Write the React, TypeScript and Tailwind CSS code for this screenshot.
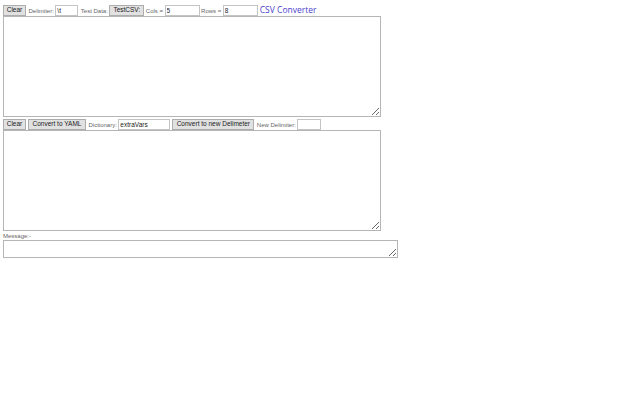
export default function App() {
  const btn =
    'shrink-0 h-[11px] px-0 bg-[#e1e1e1] border border-[#adadad] text-[6.5px] leading-none text-[#222] flex items-center justify-center whitespace-nowrap overflow-hidden'
  const label = 'shrink-0 whitespace-nowrap text-[6px] leading-none text-[#666] px-[1.5px]'
  const input =
    'shrink-0 h-[11px] border border-[#c4c4c4] bg-white text-[6.5px] leading-none text-[#222] px-[1px] outline-none'

  return (
    <div className="min-h-screen bg-white pl-[3px] pt-[5px] font-['Liberation_Sans','DejaVu_Sans',sans-serif]">
      {/* Top toolbar */}
      <div className="flex items-center h-[11px]">
        <button className={`${btn} w-[23px]`}>Clear</button>
        <span className={`${label} ml-[1px]`}>Delimiter:</span>
        <input className={`${input} w-[23px]`} defaultValue={'\\t'} />
        <span className={`${label} ml-[1px]`}>Test Data:</span>
        <button className={`${btn} w-[35px]`}>TestCSV:</button>
        <span className={label}>Cols =</span>
        <input className={`${input} w-[35px]`} defaultValue="5" />
        <span className={label}>Rows =</span>
        <input className={`${input} w-[35px]`} defaultValue="8" />
        <span className="ml-[2px] whitespace-nowrap text-[8.5px] leading-none text-[#4b3fd0] font-['Open_Sans',sans-serif]">
          CSV Converter
        </span>
      </div>

      <textarea className="block w-[378px] h-[101px] border border-[#b5b5b5] resize-y" />

      {/* Second toolbar */}
      <div className="flex items-center h-[11px] mt-[2px]">
        <button className={`${btn} w-[23px]`}>Clear</button>
        <button className={`${btn} w-[58px] ml-[2px]`}>Convert to YAML</button>
        <span className={`${label} ml-[1px]`}>Dictionary:</span>
        <input className={`${input} w-[52px]`} defaultValue="extraVars" />
        <button className={`${btn} w-[82px] ml-[2px]`}>Convert to new Delimeter</button>
        <span className={`${label} ml-[1px]`}>New Delimiter:</span>
        <input className={`${input} w-[24px]`} defaultValue="" />
      </div>

      <textarea className="block w-[378px] h-[101px] border border-[#b5b5b5] resize-y" />

      <div className="text-[6px] leading-none text-[#666] mt-[2px] h-[7px]">Message:-</div>
      <textarea className="block w-[395px] h-[18px] border border-[#b5b5b5] resize-y" />
    </div>
  )
}
